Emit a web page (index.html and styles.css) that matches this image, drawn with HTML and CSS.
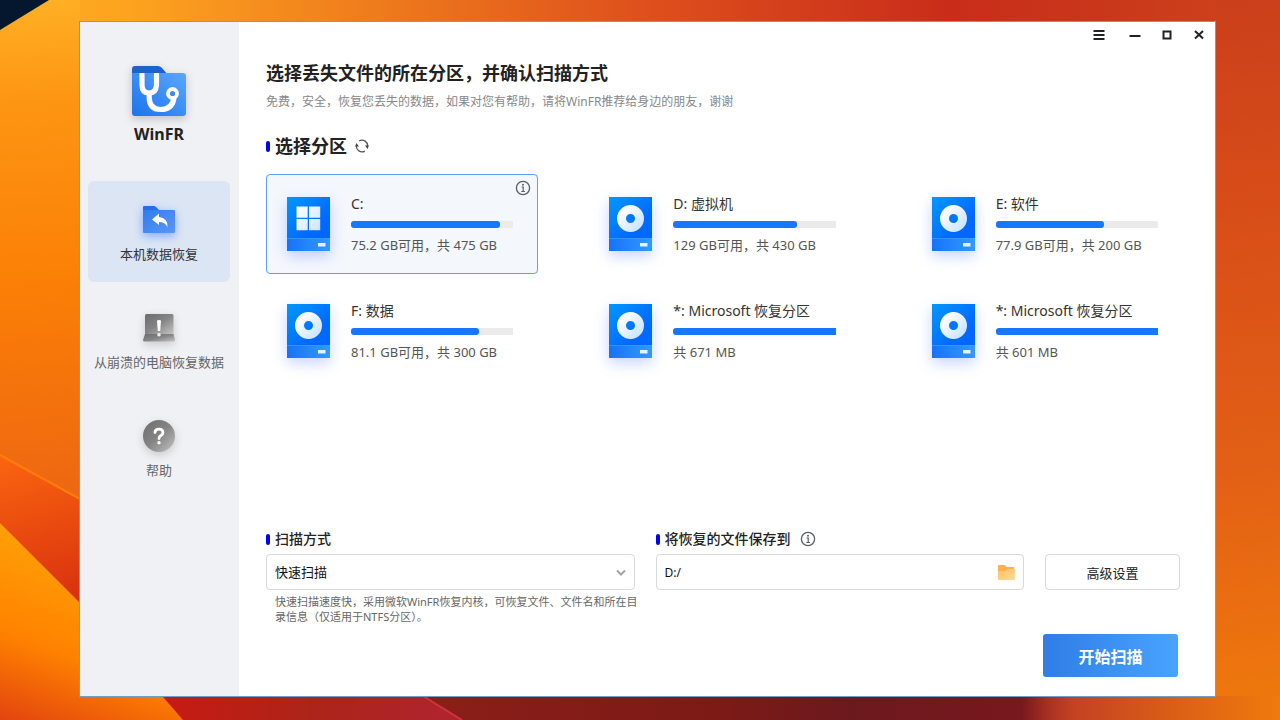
FILE: index.html
```html
<!DOCTYPE html>
<html lang="zh-CN">
<head>
<meta charset="utf-8">
<meta name="viewport" content="width=device-width, initial-scale=1">
<title>WinFR</title>
<link rel="stylesheet" href="styles.css">
</head>
<body>
<svg class="wallpaper" viewBox="0 0 1280 720" preserveAspectRatio="none" aria-hidden="true">
  <defs>
    <linearGradient id="sky" x1="0" y1="0" x2="1280" y2="0" gradientUnits="userSpaceOnUse">
      <stop offset="0" stop-color="#ffae22"/><stop offset=".1" stop-color="#fda31f"/><stop offset=".3" stop-color="#ee7a1c"/><stop offset=".5" stop-color="#de501c"/><stop offset=".74" stop-color="#c92d1a"/><stop offset=".86" stop-color="#c9371b"/><stop offset="1" stop-color="#cf451a"/>
    </linearGradient>
    <linearGradient id="left" x1="0" y1="0" x2="30" y2="520" gradientUnits="userSpaceOnUse">
      <stop offset="0" stop-color="#ffb024"/><stop offset=".2" stop-color="#fd9512"/><stop offset=".55" stop-color="#fb7f06"/><stop offset="1" stop-color="#ec6413"/>
    </linearGradient>
    <linearGradient id="right" x1="1215" y1="0" x2="1290" y2="720" gradientUnits="userSpaceOnUse">
      <stop offset="0" stop-color="#cb3f1b"/><stop offset=".3" stop-color="#d84e18"/><stop offset=".65" stop-color="#e26015"/><stop offset="1" stop-color="#f07a0c"/>
    </linearGradient>
    <linearGradient id="fold" x1="0" y1="460" x2="40" y2="610" gradientUnits="userSpaceOnUse">
      <stop offset="0" stop-color="#fa6410"/><stop offset="1" stop-color="#d8300f"/>
    </linearGradient>
    <linearGradient id="petal" x1="70" y1="560" x2="10" y2="730" gradientUnits="userSpaceOnUse">
      <stop offset="0" stop-color="#ff9c06"/><stop offset=".5" stop-color="#ff8200"/><stop offset="1" stop-color="#e04010"/>
    </linearGradient>
    <linearGradient id="floor" x1="160" y1="0" x2="460" y2="0" gradientUnits="userSpaceOnUse">
      <stop offset="0" stop-color="#c81a12"/><stop offset=".5" stop-color="#ac2418"/><stop offset="1" stop-color="#b02430"/>
    </linearGradient>
    <linearGradient id="shade" x1="420" y1="0" x2="1280" y2="0" gradientUnits="userSpaceOnUse">
      <stop offset="0" stop-color="#8c1e18"/><stop offset=".35" stop-color="#7c1a16"/><stop offset=".5" stop-color="#6c191e"/><stop offset=".7" stop-color="#78181e"/><stop offset=".73" stop-color="#a83024"/><stop offset=".76" stop-color="#c44222"/><stop offset=".9" stop-color="#e06414"/><stop offset="1" stop-color="#f07a0c"/>
    </linearGradient>
  </defs>
  <rect width="1280" height="720" fill="url(#sky)"/>
  <rect width="80" height="720" fill="url(#left)"/>
  <rect x="1215" width="65" height="720" fill="url(#right)"/>
  <path d="M0 0H49L0 30Z" fill="#04172f"/>
  <path d="M0 455 80 500V610L0 560Z" fill="url(#fold)"/>
  <path d="M0 455 80 499" stroke="#ff7c0a" stroke-width="2"/>
  <rect x="150" y="696" width="400" height="24" fill="url(#floor)"/>
  <path d="M423 696H1280V720H462Z" fill="url(#shade)"/>
  <path d="M423 696 462 720" stroke="#d0343a" stroke-width="2"/>
  <path d="M0 523 80 603 163 697 183 720H0Z" fill="url(#petal)"/>
</svg>

<svg class="symbols" aria-hidden="true">
  <defs>
    <linearGradient id="diskFace" x1="0" y1="0" x2="1" y2="1"><stop offset="0" stop-color="#0098ff"/><stop offset=".7" stop-color="#0069ff"/><stop offset="1" stop-color="#0066ff"/></linearGradient>
    <linearGradient id="diskBase" x1="0" y1="0" x2="1" y2="0"><stop offset="0" stop-color="#1673fa"/><stop offset="1" stop-color="#3399ff"/></linearGradient>
    <linearGradient id="pale" x1="0" y1="0" x2="1" y2="1"><stop offset="0" stop-color="#ffffff"/><stop offset="1" stop-color="#cce6ff"/></linearGradient>
    <linearGradient id="blue" x1="0" y1="1" x2="1" y2="0"><stop offset="0" stop-color="#1c74ec"/><stop offset="1" stop-color="#5aa6ff"/></linearGradient>
    <linearGradient id="folder" x1="0" y1="0" x2="1" y2="1"><stop offset="0" stop-color="#2f7cf0"/><stop offset="1" stop-color="#5b97f6"/></linearGradient>
    <linearGradient id="grey" x1="0" y1="0" x2="1" y2="1"><stop offset="0" stop-color="#6c6c6c"/><stop offset=".5" stop-color="#858585"/><stop offset="1" stop-color="#c4c4c4"/></linearGradient>
    <linearGradient id="amber" x1="0" y1="0" x2="1" y2="1"><stop offset="0" stop-color="#ffc062"/><stop offset="1" stop-color="#ffdc9c"/></linearGradient>
    <symbol id="disk-body" viewBox="0 0 43 54">
      <path d="M0 0H43V42H0Z" fill="url(#diskFace)"/>
      <path d="M0 41H43V54H0Z" fill="url(#diskBase)"/>
      <path d="M0 41.500H43" stroke="#3f9cff" stroke-width=".7"/>
      <rect x="31" y="46" width="7.500" height="3.500" fill="#e6f3ff"/>
    </symbol>
    <symbol id="disk" viewBox="0 0 43 54">
      <use href="#disk-body" width="43" height="54"/>
      <circle cx="21.500" cy="21.500" r="9" fill="none" stroke="url(#pale)" stroke-width="9"/>
    </symbol>
    <symbol id="disk-windows" viewBox="0 0 43 54">
      <use href="#disk-body" width="43" height="54"/>
      <path d="M9.500 9.500H20.700V20.700H9.500ZM22 9.500H33.200V20.700H22ZM9.500 22H20.700V33.200H9.500ZM22 22H33.200V33.200H22Z" fill="url(#pale)"/>
    </symbol>
    <symbol id="info" viewBox="0 0 16 16">
      <circle cx="8" cy="8" r="6.600" fill="none" stroke="#5c6066" stroke-width="1.300"/>
      <circle cx="8" cy="4.700" r="1" fill="#5c6066"/>
      <path d="M6.500 7H8.200V11.300M6.300 11.500H9.900" fill="none" stroke="#5c6066" stroke-width="1.200"/>
    </symbol>
  </defs>
</svg>

<div class="window">
  <aside class="sidebar">
    <div class="brand">
      <svg class="brand-logo" viewBox="0 0 54 51" aria-hidden="true">
        <path d="M3 0H26Q28 0 29.500 1.500L36 9V20H0V3Q0 0 3 0Z" fill="#1b62cc"/>
        <path d="M0 7H51Q54 7 54 10V47Q54 50 51 50H3Q0 50 0 47Z" fill="url(#blue)"/>
        <path d="M12.500 9.500H10V19Q10 27 17 27T24.500 19V9.500H22M17.200 27V31Q17.200 43.500 28.500 43.500 41 43.500 42 31" fill="none" stroke="#fff" stroke-width="5.200"/>
        <circle cx="40.500" cy="27.500" r="4.500" fill="#3a8bf5" stroke="#fff" stroke-width="3.800"/>
      </svg>
      <span class="brand-name">WinFR</span>
    </div>
    <nav class="nav">
      <button class="nav-item active" type="button">
        <svg class="nav-icon" viewBox="0 0 32 32" aria-hidden="true">
          <path d="M1 2H11Q12 2 13 3L17 7V14H0V3Q0 2 1 2Z" fill="#2470e2"/>
          <path d="M0 6H31Q32 6 32 7V28Q32 29 31 29H1Q0 29 0 28Z" fill="url(#folder)"/>
          <path d="M9 15.500 16 9.500V13Q25 14 24.500 23 22 18 16 18V21Z" fill="#fff"/>
        </svg>
        <span>本机数据恢复</span>
      </button>
      <button class="nav-item" type="button">
        <svg class="nav-icon" viewBox="0 0 32 32" aria-hidden="true">
          <path d="M3.500 2H29Q30.500 2 30.500 3.500V22H2V3.500Q2 2 3.500 2Z" fill="url(#grey)"/>
          <path d="M2 22H30.500L32 28Q32 29.500 30.500 29.500H1.500Q0 29.500 0 28Z" fill="url(#grey)"/>
          <path d="M14 9Q14 8 16 8T18 9L17.200 19H14.800Z" fill="#fff"/><circle cx="16" cy="22.800" r="1.800" fill="#eee"/>
        </svg>
        <span>从崩溃的电脑恢复数据</span>
      </button>
      <button class="nav-item" type="button">
        <svg class="nav-icon" viewBox="0 0 32 32" aria-hidden="true">
          <circle cx="16" cy="16" r="16" fill="url(#grey)"/>
          <path d="M12 12.500Q12 9.200 16 9.200T20 12.500Q20 14.300 18 15.400 16 16.500 16 18.500" fill="none" stroke="#fff" stroke-width="2.800" stroke-linecap="round"/><circle cx="16" cy="22.800" r="1.700" fill="#fff"/>
        </svg>
        <span>帮助</span>
      </button>
    </nav>
  </aside>

  <main class="content">
    <div class="titlebar">
      <button class="win-button menu" type="button" aria-label="菜单"><svg viewBox="0 0 12 12"><path d="M.5 2H11.500M.5 6H11.500M.5 10H11.500"/></svg></button>
      <button class="win-button" type="button" aria-label="最小化"><svg viewBox="0 0 12 12"><path d="M.5 7H11.500"/></svg></button>
      <button class="win-button" type="button" aria-label="最大化"><svg viewBox="0 0 12 12"><path d="M2.500 2.500H9.500V9.500H2.500Z"/></svg></button>
      <button class="win-button" type="button" aria-label="关闭"><svg viewBox="0 0 12 12"><path d="M2 2 10 9.500M10 2 2 9.500"/></svg></button>
    </div>

    <header class="intro">
      <h1>选择丢失文件的所在分区，并确认扫描方式</h1>
      <p>免费，安全，恢复您丢失的数据，如果对您有帮助，请将WinFR推荐给身边的朋友，谢谢</p>
    </header>

    <section class="partitions">
      <div class="heading large">
        <h2>选择分区</h2>
        <button class="icon-button" type="button" aria-label="刷新">
          <svg viewBox="0 0 14 14"><path d="M4.200 1.900A5.700 5.700 0 0 1 12.600 7.500M9.800 12.100A5.700 5.700 0 0 1 1.400 6.500" fill="none" stroke="#555" stroke-width="1.300"/><path d="M10 6.600H13.800L12.600 10ZM4 7.400H.2L1.400 4Z" fill="#444"/></svg>
        </button>
      </div>
      <div class="disks">
        <button class="disk selected" type="button" aria-pressed="true">
          <svg class="disk-icon" aria-hidden="true"><use href="#disk-windows"/></svg>
          <span class="disk-text"><span class="disk-name">C:</span><span class="meter"><span class="meter-fill" style="width:92%"></span></span><span class="disk-size">75.2 GB可用，共 475 GB</span></span>
          <svg class="info-icon corner" aria-hidden="true"><use href="#info"/></svg>
        </button>
        <button class="disk" type="button" aria-pressed="false">
          <svg class="disk-icon" aria-hidden="true"><use href="#disk"/></svg>
          <span class="disk-text"><span class="disk-name">D: 虚拟机</span><span class="meter"><span class="meter-fill" style="width:76%"></span></span><span class="disk-size">129 GB可用，共 430 GB</span></span>
        </button>
        <button class="disk" type="button" aria-pressed="false">
          <svg class="disk-icon" aria-hidden="true"><use href="#disk"/></svg>
          <span class="disk-text"><span class="disk-name">E: 软件</span><span class="meter"><span class="meter-fill" style="width:67%"></span></span><span class="disk-size">77.9 GB可用，共 200 GB</span></span>
        </button>
        <button class="disk" type="button" aria-pressed="false">
          <svg class="disk-icon" aria-hidden="true"><use href="#disk"/></svg>
          <span class="disk-text"><span class="disk-name">F: 数据</span><span class="meter"><span class="meter-fill" style="width:79%"></span></span><span class="disk-size">81.1 GB可用，共 300 GB</span></span>
        </button>
        <button class="disk" type="button" aria-pressed="false">
          <svg class="disk-icon" aria-hidden="true"><use href="#disk"/></svg>
          <span class="disk-text"><span class="disk-name">*: Microsoft 恢复分区</span><span class="meter"><span class="meter-fill full" style="width:100%"></span></span><span class="disk-size">共 671 MB</span></span>
        </button>
        <button class="disk" type="button" aria-pressed="false">
          <svg class="disk-icon" aria-hidden="true"><use href="#disk"/></svg>
          <span class="disk-text"><span class="disk-name">*: Microsoft 恢复分区</span><span class="meter"><span class="meter-fill full" style="width:100%"></span></span><span class="disk-size">共 601 MB</span></span>
        </button>
      </div>
    </section>

    <form class="options">
      <div class="field">
        <div class="heading"><label for="mode">扫描方式</label></div>
        <div class="control">
          <select id="mode"><option>快速扫描</option></select>
          <svg class="chevron" viewBox="0 0 10 8" aria-hidden="true"><path d="M1 1.500 5 5.500 9 1.500"/></svg>
        </div>
        <p class="hint">快速扫描速度快，采用微软WinFR恢复内核，可恢复文件、文件名和所在目<br>录信息（仅适用于NTFS分区）。</p>
      </div>
      <div class="field">
        <div class="heading"><label for="target">将恢复的文件保存到</label><svg class="info-icon" aria-hidden="true"><use href="#info"/></svg></div>
        <div class="control">
          <input id="target" type="text" value="D:/">
          <button class="browse" type="button" aria-label="浏览">
            <svg viewBox="0 0 17 15"><path d="M0 1Q0 0 1 0H6.500L8.500 2H16V7H0Z" fill="#ffb04a"/><path d="M0 6H8L9.500 4H17V14Q17 15 16 15H1Q0 15 0 14Z" fill="url(#amber)"/></svg>
          </button>
        </div>
      </div>
      <button class="advanced" type="button">高级设置</button>
    </form>

    <div class="actions"><button class="start" type="button">开始扫描</button></div>
  </main>
</div>
</body>
</html>
```

FILE: styles.css
```css
* { box-sizing: border-box; }

body {
  margin: 0;
  min-height: 100vh;
  padding: 21px 64px 23px 79px;
  display: flex;
  font-family: "Noto Sans", "Noto Sans CJK SC", sans-serif;
  font-size: 13px;
  color: #222;
}

h1, h2, p { margin: 0; }

button, input, select {
  margin: 0;
  padding: 0;
  border: 0;
  background: none;
  font: inherit;
  color: inherit;
}

svg { display: block; }

.wallpaper {
  position: fixed;
  inset: 0;
  width: 100%;
  height: 100%;
  z-index: -1;
}

.symbols { position: absolute; width: 0; height: 0; }

.window {
  flex: 1;
  display: flex;
  background: #fff;
  border: 1px solid #6f9fc8;
}

.sidebar {
  flex: none;
  width: 159px;
  padding: 44px 9px 0 8px;
  background: #f0f1f5;
}

.brand {
  display: flex;
  flex-direction: column;
  align-items: center;
  gap: 6px;
}

.brand-logo {
  width: 54px;
  height: 51px;
  filter: drop-shadow(0 3px 4px rgba(0, 0, 0, .2));
}

.brand-name {
  font-size: 16px;
  line-height: 22px;
  font-weight: 700;
}

.nav {
  display: flex;
  flex-direction: column;
  gap: 7px;
  margin-top: 36px;
}

.nav-item {
  display: flex;
  flex-direction: column;
  align-items: center;
  gap: 8px;
  padding: 23px 0 18px;
  border-radius: 6px;
  line-height: 20px;
  color: #666;
  white-space: nowrap;
}

.nav-item.active { background: #dbe5f4; color: #333; }

.nav-icon {
  width: 32px;
  height: 32px;
  overflow: visible;
  filter: drop-shadow(0 3px 4px rgba(0, 0, 0, .16));
}

.active .nav-icon { filter: drop-shadow(0 3px 5px rgba(30, 100, 255, .45)); }

.content {
  flex: 1;
  min-width: 0;
  display: flex;
  flex-direction: column;
  padding: 0 32px 19px 27px;
}

.titlebar {
  display: flex;
  justify-content: flex-end;
  margin-right: -32px;
}

.win-button {
  width: 32px;
  height: 26px;
  display: grid;
  place-items: center;
}

.win-button.menu { margin-right: 4px; }

.win-button svg {
  width: 12px;
  height: 12px;
  fill: none;
  stroke: #222;
  stroke-width: 2;
}

.intro { margin-top: 12px; }

.intro h1 {
  font-size: 18px;
  line-height: 26px;
  font-weight: 700;
}

.intro p {
  margin-top: 6px;
  font-size: 12px;
  line-height: 20px;
  color: #888;
}

.partitions { margin-top: 21px; }

.heading {
  display: flex;
  align-items: center;
  gap: 5px;
  font-size: 14px;
  line-height: 20px;
  font-weight: 500;
}

.heading::before {
  content: "";
  width: 4px;
  height: 11px;
  border-radius: 2px;
  background: #0000ff;
}

.heading.large { line-height: 26px; }

.heading h2 { font-size: 18px; font-weight: 700; }

.icon-button { margin-left: 3px; }
.icon-button svg { width: 14px; height: 14px; }

.info-icon { width: 16px; height: 16px; }
.heading .info-icon { margin-left: 4px; }

.disks {
  display: grid;
  grid-template-columns: repeat(3, 1fr);
  gap: 7px 50px;
  margin-top: 15px;
}

.disk {
  position: relative;
  display: flex;
  align-items: center;
  gap: 21px;
  height: 100px;
  padding: 0 24px 0 20px;
  border: 1px solid transparent;
  border-radius: 4px;
  text-align: left;
}

.disk.selected { border-color: #5b9ff8; background: #f4f7fc; }

.disk-icon {
  flex: none;
  width: 43px;
  height: 54px;
  filter: drop-shadow(0 5px 7px rgba(30, 80, 255, .25));
}

.disk-text {
  flex: 1;
  min-width: 0;
  display: flex;
  flex-direction: column;
  white-space: nowrap;
}

.disk-name { font-size: 14px; line-height: 20px; color: #333; }

.meter {
  height: 7px;
  margin: 7px 0;
  background: #ebebeb;
  border-radius: 3px 0 0 3px;
}

.meter-fill {
  display: block;
  height: 100%;
  background: #1677ff;
  border-radius: 3px;
}

.meter-fill.full { border-radius: 3px 0 0 3px; }

.disk-size { line-height: 20px; color: #555; }

.corner { position: absolute; top: 5px; right: 6px; }

.options {
  display: grid;
  grid-template-columns: minmax(0, 1fr) minmax(0, 1fr) 135px;
  column-gap: 21px;
  margin: auto 3px 0 0;
}

.control {
  position: relative;
  display: flex;
  height: 36px;
  margin-top: 5px;
  border: 1px solid #d9d9d9;
  border-radius: 4px;
}

.control select, .control input {
  flex: 1;
  min-width: 0;
  padding: 0 8px;
  appearance: none;
  color: #111;
  outline: 0;
}

.control input { font-size: 12px; }

.chevron {
  position: absolute;
  top: 14px;
  right: 8px;
  width: 10px;
  height: 8px;
  fill: none;
  stroke: #a0a5ad;
  stroke-width: 2;
  pointer-events: none;
}

.browse { padding: 0 8px; }
.browse svg { width: 17px; height: 15px; }

.hint {
  padding: 4px 0 0 9px;
  font-size: 11px;
  line-height: 15px;
  color: #666;
  white-space: nowrap;
}

.advanced {
  height: 36px;
  margin-top: 25px;
  border: 1px solid #d9d9d9;
  border-radius: 4px;
}

.actions {
  display: flex;
  justify-content: flex-end;
  margin: 10px 5px 0 0;
}

.start {
  width: 135px;
  height: 43px;
  border-radius: 3px;
  background: linear-gradient(90deg, #2f7de6, #4aa3ff);
  font-size: 16px;
  font-weight: 700;
  color: #fff;
}
```
